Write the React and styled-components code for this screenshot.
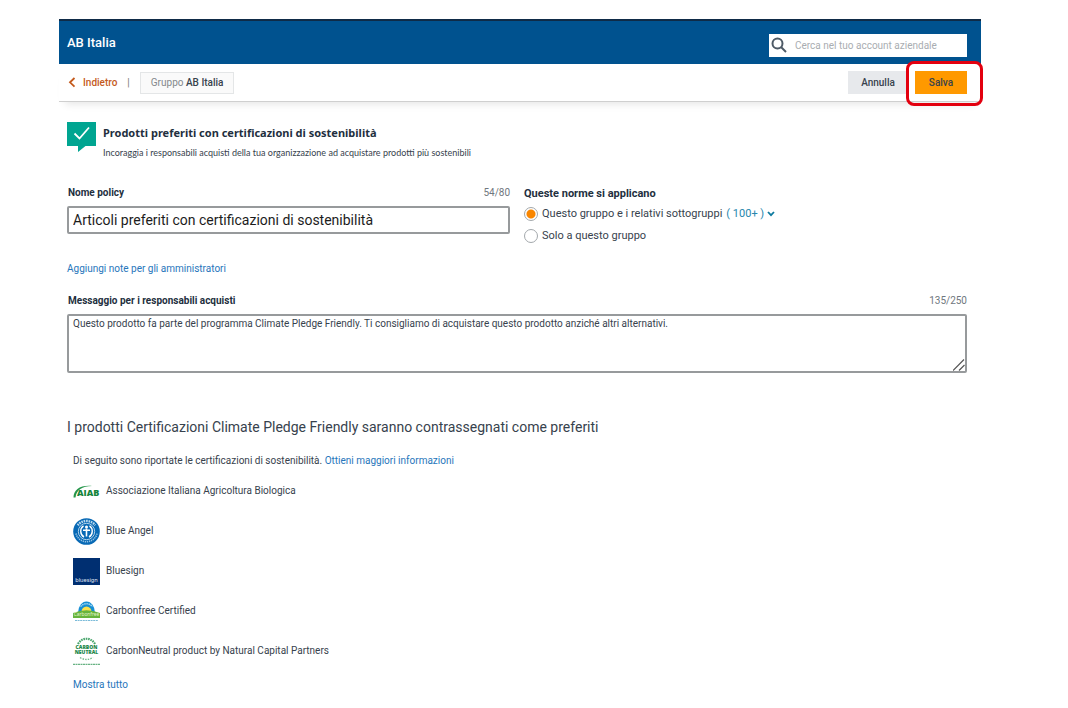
import React, { useState } from "react";
import styled, { createGlobalStyle } from "styled-components";

const GlobalStyle = createGlobalStyle`
  *, *::before, *::after {
    box-sizing: border-box;
  }
  body {
    margin: 0;
    background: #fff;
    color: #37424d;
    font-family: Roboto, "Noto Sans", sans-serif;
    font-size: 10px;
    line-height: 16px;
  }
  button, input, textarea {
    font-family: inherit;
    color: inherit;
  }
  h1, h2, p, ul, fieldset {
    margin: 0;
    padding: 0;
    border: 0;
  }
`;

const Page = styled.div`
  margin: 19px 87px 0 59px;
`;

const Header = styled.header`
  display: flex;
  align-items: center;
  justify-content: space-between;
  height: 45px;
  padding: 5px 14px 0 8px;
  border-top: 2px solid #0f2b47;
  background: #00528f;
`;

const Brand = styled.span`
  padding-bottom: 4px;
  color: #fff;
  font-size: 13px;
  font-weight: 500;
`;

const SearchBox = styled.label`
  display: flex;
  align-items: center;
  gap: 8px;
  width: 198px;
  height: 23px;
  padding: 0 2px;
  background: #fff;
`;

const SearchInput = styled.input`
  flex: 1;
  min-width: 0;
  padding: 0;
  border: 0;
  outline: 0;
  font-size: 10px;
  &::placeholder {
    color: #a9adb1;
    opacity: 1;
  }
`;

const Toolbar = styled.div`
  display: flex;
  align-items: center;
  height: 38px;
  padding: 0 14px 0 8px;
  border-bottom: 1px solid #cfcfcf;
  box-shadow: 0 8px 8px -6px #e4e4e4;
`;

const BackLink = styled.a`
  display: flex;
  align-items: center;
  gap: 6px;
  color: #c45a1c;
  font-weight: 500;
  text-decoration: none;
`;

const Divider = styled.span`
  margin: 0 10px;
  color: #777;
`;

const GroupTag = styled.span`
  padding: 2px 10px;
  border: 1px solid #e4e6e7;
  background: #fafafa;
  color: #83888c;
  strong {
    color: #37424d;
    font-weight: 500;
  }
`;

const Actions = styled.div`
  display: flex;
  gap: 7px;
  margin-left: auto;
`;

const Button = styled.button`
  width: ${props => props.$primary ? "52px" : "60px"};
  height: 23px;
  padding: 0;
  border: 0;
  background: ${props => props.$primary ? "#ff9900" : "#e7e9ec"};
  font-size: 10px;
  font-weight: 500;
`;

const Highlighted = styled.div`
  position: relative;
  &::after {
    content: "";
    position: absolute;
    inset: -10px -16px -12px -9px;
    border: 3px solid #e3000f;
    border-radius: 8px;
    pointer-events: none;
  }
`;

const Main = styled.main`
  padding: 20px 14px 0 8px;
`;

const Intro = styled.div`
  display: flex;
  gap: 7px;
  height: 42px;
`;

const Title = styled.h1`
  margin-top: 3px;
  color: #232f3e;
  font-family: "Noto Sans", sans-serif;
  font-size: 11px;
  font-weight: 700;
  line-height: 16px;
`;

const Subtitle = styled.p`
  margin-top: 4px;
  font-family: Lato, sans-serif;
  font-size: 9px;
`;

const Fields = styled.div`
  display: grid;
  grid-template-columns: 1fr 1fr;
  gap: 14px;
  margin-top: 21px;
`;

const FieldHead = styled.div`
  display: flex;
  justify-content: space-between;
  margin-bottom: 5px;
`;

const Label = styled.label`
  padding-left: 1px;
  color: #232f3e;
  font-weight: 700;
`;

const Counter = styled.span`
  color: #6f777e;
`;

const TextInput = styled.input`
  display: block;
  width: 100%;
  height: 28px;
  padding: 0 4px;
  border: 2px solid #979a9c;
  border-radius: 2px;
  color: #1c1c1c;
  font-size: 14px;
`;

const Scope = styled.fieldset`
  min-width: 0;
`;

const Legend = styled.legend`
  padding: 1px 0;
  color: #232f3e;
  font-size: 11px;
  font-weight: 700;
`;

const RadioRow = styled.div`
  display: flex;
  align-items: center;
  gap: 4px;
  height: 22px;
  font-size: 11px;
`;

const Radio = styled.input`
  appearance: none;
  width: 14px;
  height: 14px;
  margin: 0;
  border: 1px solid #a3a8ac;
  border-radius: 50%;
  background: #fff;
  &:checked {
    background: radial-gradient(circle, #f98600 0 4px, #fff 5px);
  }
`;

const CountLink = styled.a`
  display: flex;
  align-items: center;
  gap: 3px;
  color: #2787ad;
  text-decoration: none;
`;

const Link = styled.a`
  color: #2776bb;
  text-decoration: none;
`;

const Message = styled.div`
  margin: 16px 0 45px;
`;

const AreaWrap = styled.div`
  position: relative;
  svg {
    position: absolute;
    right: 2px;
    bottom: 2px;
    pointer-events: none;
  }
`;

const TextArea = styled.textarea`
  display: block;
  width: 100%;
  height: 59px;
  padding: 0 4px;
  border: 2px solid #979a9c;
  border-radius: 2px;
  font-size: 10px;
  line-height: 16px;
  resize: none;
`;

const NotesLine = styled.p`
  margin-top: 14px;
`;

const SectionTitle = styled.h2`
  font-size: 14px;
  font-weight: 400;
  line-height: 18px;
`;

const Certifications = styled.section`
  padding: 17px 6px 0;
`;

const CertList = styled.ul`
  margin: 2px 0 6px;
  list-style: none;
`;

const CertItem = styled.li`
  display: flex;
  align-items: center;
  gap: 6px;
  height: 40px;
  svg {
    flex: none;
  }
`;

const SearchIcon = () => (
  <svg width="16" height="16" viewBox="0 0 16 16" fill="none" stroke="#4e5a66" strokeWidth="2">
    <circle cx="6.5" cy="6.5" r="5" />
    <path d="M10 10l5 5" />
  </svg>
);

const BackIcon = () => (
  <svg width="10" height="12" viewBox="0 0 10 12" fill="none" stroke="#c45a1c" strokeWidth="1.8">
    <path d="M7.5 1L3 5.3l4.5 4.3" />
  </svg>
);

const CheckIcon = () => (
  <svg width="29" height="30" viewBox="0 0 29 30">
    <path d="M0 0h29v24H18.5l-7.500 6v-6H0z" fill="#00a591" />
    <path d="M7.500 11.500l5 5L22 5.500" fill="none" stroke="#fff" strokeWidth="1.8" />
  </svg>
);

const ChevronIcon = () => (
  <svg width="8" height="8" viewBox="0 0 8 8" fill="none" stroke="#0d7a9f" strokeWidth="1.8">
    <path d="M1 2l3 3.2L7 2" />
  </svg>
);

const GripIcon = () => (
  <svg width="12" height="12" viewBox="0 0 12 12" stroke="#555" strokeWidth="1.2">
    <path d="M0 11.5L11 .5M6 11.5L11.5 6" />
  </svg>
);

const AiabLogo = () => (
  <svg width="27" height="13" viewBox="0 0 27 13">
    <path d="M.5 12.5C.5 5 7 0 19 1C9 1 3.500 5 2.500 12.500z" fill="#25964a" />
    <text x="4" y="11" fontFamily="Open Sans, sans-serif" fontSize="9" fontWeight="800" fill="#16853c">AIAB</text>
  </svg>
);

const BlueAngelLogo = () => (
  <svg width="27" height="27" viewBox="0 0 27 27" fill="none">
    <circle cx="13.5" cy="13.5" r="13.3" fill="#0869b5" />
    <path d="M4.800 7.300A10.800 10.800 0 0 1 22.200 7.300" stroke="#b9d9ee" strokeWidth="2.400" strokeDasharray="1.600 .8" />
    <path d="M3 15.500A10.800 10.800 0 0 0 24 15.500" stroke="#8fbfe2" strokeWidth="1.600" strokeDasharray="1.300 .8" />
    <circle cx="13.5" cy="13.5" r="8.200" fill="#0869b5" stroke="#d7e8f5" strokeWidth=".8" />
    <path d="M10.500 7.800C6.500 10.500 7 17 11 19M16.500 7.800C20.500 10.500 20 17 16 19" stroke="#fff" strokeWidth="1.400" />
    <circle cx="13.5" cy="9" r="1.500" fill="#fff" />
    <path d="M10 12.200h7M13.500 10.500v8" stroke="#fff" strokeWidth="1.600" />
  </svg>
);

const BluesignLogo = () => (
  <svg width="27" height="27" viewBox="0 0 27 27">
    <path d="M0 0h27v27H0z" fill="#002f71" />
    <text x="13.5" y="24" textAnchor="middle" fontFamily="Noto Sans, sans-serif" fontSize="5.6" fill="#e1e9f4">bluesign</text>
  </svg>
);

const CarbonfreeLogo = () => (
  <svg width="27" height="21" viewBox="0 0 27 21">
    <path d="M5 12A8.500 11.500 0 0 1 22 12z" fill="#178fd4" />
    <path d="M7.500 5.500Q13.500 0 19.500 5.500" fill="none" stroke="#a9d9f2" strokeWidth="1.5" strokeDasharray="1.5 .7" />
    <path d="M8.500 11a5 5.500 0 0 1 10 0z" fill="#fbe24c" />
    <path d="M0 12Q13.500 6.500 27 12v5H0z" fill="#67b43d" />
    <text x="13.5" y="15" textAnchor="middle" fontFamily="Noto Sans, sans-serif" fontSize="4.8" fill="#e6f4cc">Carbonfree</text>
    <path d="M2 19.500h23" stroke="#7bbbd9" strokeWidth="1" strokeDasharray="2 .6" />
  </svg>
);

const CarbonNeutralLogo = () => (
  <svg width="27" height="29" viewBox="0 0 27 29" fill="none">
    <path d="M5 7C9 0 18 0 22 7" stroke="#48a56c" strokeWidth="2.2" strokeDasharray="1.6 .8" />
    <text x="13.5" y="12" textAnchor="middle" fontFamily="Open Sans, sans-serif" fontSize="5" fontWeight="800" fill="#198648">CARBON</text>
    <text x="13.5" y="16.5" textAnchor="middle" fontFamily="Open Sans, sans-serif" fontSize="5" fontWeight="800" fill="#198648">NEUTRAL</text>
    <path d="M7 20.5Q13.5 24.500 20 20.5" stroke="#74ba8d" strokeWidth="1.4" strokeDasharray="1.5 1.2" />
    <path d="M0 27.3h27" stroke="#69b384" strokeWidth="1.3" strokeDasharray="2 .5" />
  </svg>
);

const certifications = [
  { name: "Associazione Italiana Agricoltura Biologica", Logo: AiabLogo },
  { name: "Blue Angel", Logo: BlueAngelLogo },
  { name: "Bluesign", Logo: BluesignLogo },
  { name: "Carbonfree Certified", Logo: CarbonfreeLogo },
  { name: "CarbonNeutral product by Natural Capital Partners", Logo: CarbonNeutralLogo },
];

export default function App() {
  const [scope, setScope] = useState("all");

  return (
    <Page>
      <GlobalStyle />
      <Header>
        <Brand>AB Italia</Brand>
        <SearchBox>
          <SearchIcon />
          <SearchInput type="text" aria-label="Cerca" placeholder="Cerca nel tuo account aziendale" />
        </SearchBox>
      </Header>
      <Toolbar>
        <BackLink href="#"><BackIcon />Indietro</BackLink>
        <Divider>|</Divider>
        <GroupTag>Gruppo <strong>AB Italia</strong></GroupTag>
        <Actions>
          <Button type="button">Annulla</Button>
          <Highlighted>
            <Button type="button" $primary>Salva</Button>
          </Highlighted>
        </Actions>
      </Toolbar>
      <Main>
        <Intro>
          <CheckIcon />
          <div>
            <Title>Prodotti preferiti con certificazioni di sostenibilità</Title>
            <Subtitle>Incoraggia i responsabili acquisti della tua organizzazione ad acquistare prodotti più sostenibili</Subtitle>
          </div>
        </Intro>
        <Fields>
          <div>
            <FieldHead>
              <Label htmlFor="policy">Nome policy</Label>
              <Counter>54/80</Counter>
            </FieldHead>
            <TextInput id="policy" type="text" defaultValue="Articoli preferiti con certificazioni di sostenibilità" />
          </div>
          <Scope>
            <Legend>Queste norme si applicano</Legend>
            <RadioRow>
              <Radio id="all" type="radio" name="scope" checked={scope === "all"} onChange={() => setScope("all")} />
              <label htmlFor="all">Questo gruppo e i relativi sottogruppi</label>
              <CountLink href="#">( 100+ )<ChevronIcon /></CountLink>
            </RadioRow>
            <RadioRow>
              <Radio id="only" type="radio" name="scope" checked={scope === "only"} onChange={() => setScope("only")} />
              <label htmlFor="only">Solo a questo gruppo</label>
            </RadioRow>
          </Scope>
        </Fields>
        <NotesLine>
          <Link href="#">Aggiungi note per gli amministratori</Link>
        </NotesLine>
        <Message>
          <FieldHead>
            <Label htmlFor="message">Messaggio per i responsabili acquisti</Label>
            <Counter>135/250</Counter>
          </FieldHead>
          <AreaWrap>
            <TextArea
              id="message"
              defaultValue="Questo prodotto fa parte del programma Climate Pledge Friendly. Ti consigliamo di acquistare questo prodotto anziché altri alternativi."
            />
            <GripIcon />
          </AreaWrap>
        </Message>
        <SectionTitle>I prodotti Certificazioni Climate Pledge Friendly saranno contrassegnati come preferiti</SectionTitle>
        <Certifications>
          <p>
            Di seguito sono riportate le certificazioni di sostenibilità. <Link href="#">Ottieni maggiori informazioni</Link>
          </p>
          <CertList>
            {certifications.map(({ name, Logo }) => (
              <CertItem key={name}><Logo />{name}</CertItem>
            ))}
          </CertList>
          <Link href="#">Mostra tutto</Link>
        </Certifications>
      </Main>
    </Page>
  );
}
